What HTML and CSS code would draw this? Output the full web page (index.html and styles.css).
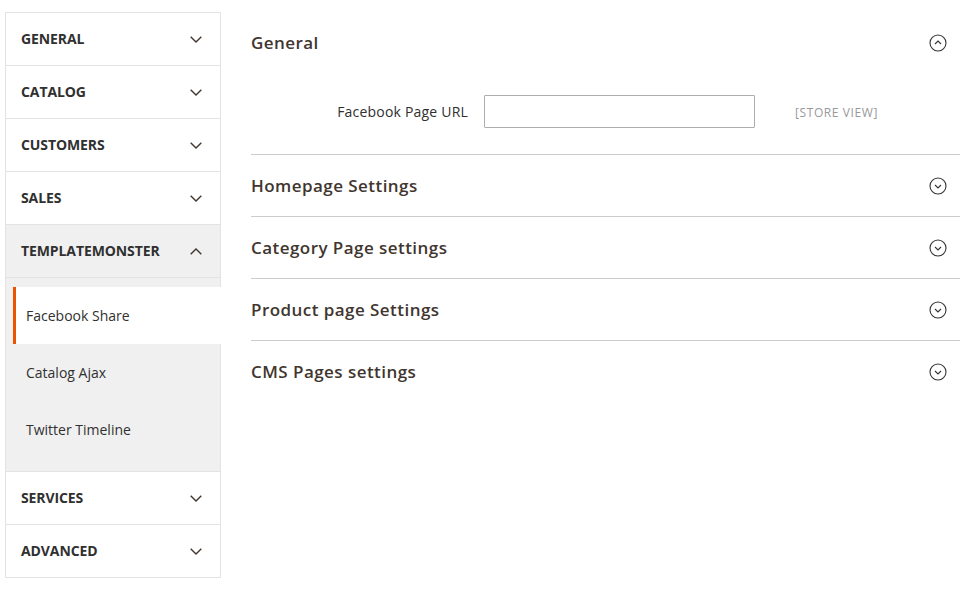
FILE: index.html
```html
<!DOCTYPE html>
<html>
<head>
<meta charset="utf-8">
<link rel="stylesheet" href="styles.css">
</head>
<body>
<div class="page">
  <nav class="sidebar">
    <div class="nav-item"><span>GENERAL</span><svg class="chev" width="12" height="7" viewBox="0 0 12 7"><polyline points="0.7,0.7 6,6 11.3,0.7"/></svg></div>
    <div class="nav-item"><span>CATALOG</span><svg class="chev" width="12" height="7" viewBox="0 0 12 7"><polyline points="0.7,0.7 6,6 11.3,0.7"/></svg></div>
    <div class="nav-item"><span>CUSTOMERS</span><svg class="chev" width="12" height="7" viewBox="0 0 12 7"><polyline points="0.7,0.7 6,6 11.3,0.7"/></svg></div>
    <div class="nav-item"><span>SALES</span><svg class="chev" width="12" height="7" viewBox="0 0 12 7"><polyline points="0.7,0.7 6,6 11.3,0.7"/></svg></div>
    <div class="nav-item open"><span>TEMPLATEMONSTER</span><svg class="chev" width="12" height="7" viewBox="0 0 12 7"><polyline points="0.7,6.3 6,1 11.3,6.3"/></svg></div>
    <div class="submenu">
      <div class="sub-item active">Facebook Share</div>
      <div class="sub-item">Catalog Ajax</div>
      <div class="sub-item">Twitter Timeline</div>
    </div>
    <div class="nav-item"><span>SERVICES</span><svg class="chev" width="12" height="7" viewBox="0 0 12 7"><polyline points="0.7,0.7 6,6 11.3,0.7"/></svg></div>
    <div class="nav-item last"><span>ADVANCED</span><svg class="chev" width="12" height="7" viewBox="0 0 12 7"><polyline points="0.7,0.7 6,6 11.3,0.7"/></svg></div>
  </nav>
  <main class="content">
    <section class="block first">
      <div class="block-head"><span>General</span><svg class="circ" width="18" height="18" viewBox="0 0 18 18"><circle cx="9" cy="9" r="8"/><polyline points="6,10 9,7 12,10"/></svg></div>
      <div class="form-row">
        <label class="label">Facebook Page URL</label>
        <input class="input" type="text">
        <span class="scope">[STORE VIEW]</span>
      </div>
    </section>
    <section class="block">
      <div class="block-head"><span>Homepage Settings</span><svg class="circ" width="18" height="18" viewBox="0 0 18 18"><circle cx="9" cy="9" r="8"/><polyline points="6,8 9,11 12,8"/></svg></div>
    </section>
    <section class="block">
      <div class="block-head"><span>Category Page settings</span><svg class="circ" width="18" height="18" viewBox="0 0 18 18"><circle cx="9" cy="9" r="8"/><polyline points="6,8 9,11 12,8"/></svg></div>
    </section>
    <section class="block">
      <div class="block-head"><span>Product page Settings</span><svg class="circ" width="18" height="18" viewBox="0 0 18 18"><circle cx="9" cy="9" r="8"/><polyline points="6,8 9,11 12,8"/></svg></div>
    </section>
    <section class="block last">
      <div class="block-head"><span>CMS Pages settings</span><svg class="circ" width="18" height="18" viewBox="0 0 18 18"><circle cx="9" cy="9" r="8"/><polyline points="6,8 9,11 12,8"/></svg></div>
    </section>
  </main>
</div>
</body>
</html>
```

FILE: styles.css
```css
* { box-sizing: border-box; }
html, body { margin: 0; padding: 0; background: #fff; }
body { font-family: "Open Sans", "Liberation Sans", sans-serif; color: #303030; }

.page {
  display: flex;
  align-items: flex-start;
  padding: 12px 11px 0 5px;
  gap: 30px;
}

.sidebar {
  width: 216px;
  flex: none;
  border: 1px solid #e3e3e3;
  border-bottom: none;
}

.nav-item {
  height: 53px;
  display: flex;
  align-items: center;
  justify-content: space-between;
  padding: 0 18px 2px 15px;
  border-bottom: 1px solid #e3e3e3;
  font-size: 14px;
  font-weight: 700;
  color: #303030;
  letter-spacing: -0.1px;
}
.nav-item.open { background: #f0f0f0; }

.chev { display: block; position: relative; top: 1px; }
.chev polyline { fill: none; stroke: #41362f; stroke-width: 1.4; }

.submenu {
  background: #f0f0f0;
  padding: 9px 0 13px 7px;
  border-bottom: 1px solid #e3e3e3;
}
.sub-item {
  height: 57px;
  display: flex;
  align-items: center;
  padding-left: 13px;
  font-size: 14px;
  color: #303030;
}
.sub-item.active {
  background: #fff;
  border-left: 3px solid #eb5202;
  padding-left: 10px;
  margin-right: -1px;
}

.content { flex: 1; min-width: 0; }

.block { border-bottom: 1px solid #cccccc; }
.block.last { border-bottom: none; }

.block-head {
  height: 61px;
  display: flex;
  align-items: center;
  justify-content: space-between;
  padding-right: 13px;
  font-size: 17px;
  font-weight: 600;
  color: #41362f;
  letter-spacing: 0.45px;
}
.block.first .block-head { height: 62px; padding-bottom: 2px; }

.circ { display: block; }
.block.first .circ { position: relative; top: 1px; }
.circ circle { fill: none; stroke: #333; stroke-width: 1.1; }
.circ polyline { fill: none; stroke: #333; stroke-width: 1.1; }

.form-row {
  display: flex;
  align-items: center;
  padding: 21px 0 26px;
}
.label {
  width: 217px;
  text-align: right;
  font-size: 14px;
  color: #303030;
  letter-spacing: 0.2px;
}
.input {
  margin-left: 16px;
  width: 271px;
  height: 33px;
  border: 1px solid #adadad;
  border-radius: 1px;
  padding: 0 8px;
  font-family: inherit;
  font-size: 14px;
}
.scope {
  margin-left: 40px;
  padding-top: 2px;
  font-size: 12px;
  color: #999999;
  letter-spacing: 0.6px;
}
```
